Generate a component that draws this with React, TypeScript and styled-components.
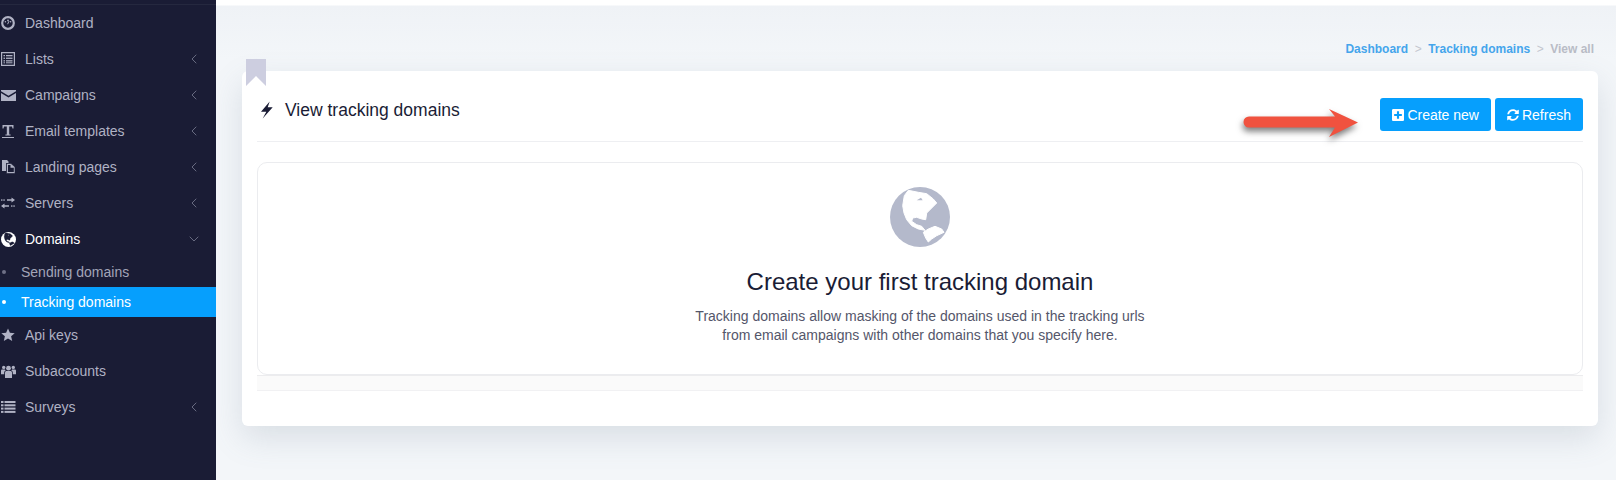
import { ChevronDown, ChevronLeft } from "lucide-react";
import { ReactNode } from "react";
import { FaPlusSquare, FaSyncAlt } from "react-icons/fa";
import styled, { createGlobalStyle } from "styled-components";

const GlobalStyle = createGlobalStyle`
  html, body {
    margin: 0;
    height: 480px;
    overflow: hidden;
    font-family: "Liberation Sans", Arial, sans-serif;
    background: #f3f6f9;
  }
`;

const Page = styled.div`
  display: flex;
  height: 480px;
  overflow: hidden;
`;

const Sidebar = styled.aside`
  width: 216px;
  flex-shrink: 0;
  background: #1a1c35;
`;

const BrandEdge = styled.div`
  height: 4px;
  border-bottom: 1px solid #25283f;
`;

const MenuRow = styled.div<{ $open?: boolean }>`
  display: flex;
  align-items: center;
  height: 36px;
  font-size: 14px;
  color: ${(p) => (p.$open ? "#ffffff" : "#b0b2c4")};
`;

const MenuIcon = styled.span`
  width: 25px;
  padding-left: 1px;
  box-sizing: border-box;
  display: flex;
  align-items: center;
`;

const MenuLabel = styled.span`
  flex: 1;
`;

const Caret = styled.span`
  width: 16px;
  margin-right: 14px;
  display: flex;
  justify-content: center;
  color: #6e7086;
`;

const SubRow = styled.div<{ $active?: boolean }>`
  display: flex;
  align-items: center;
  height: 30px;
  font-size: 14px;
  color: ${(p) => (p.$active ? "#ffffff" : "#a3a5b8")};
  background: ${(p) => (p.$active ? "#069ffd" : "transparent")};
`;

const SubDot = styled.span<{ $active?: boolean }>`
  width: 4px;
  height: 4px;
  margin: 0 15px 0 2px;
  border-radius: 50%;
  background: ${(p) => (p.$active ? "#ffffff" : "#6e7086")};
`;

const Main = styled.main`
  flex: 1;
  min-width: 0;
  background: linear-gradient(#ffffff 0 5px, #eff2f6 6px, #f3f6f9 60px);
  padding: 41px 18px 0 26px;
`;

const Breadcrumb = styled.div`
  display: flex;
  justify-content: flex-end;
  gap: 6.5px;
  height: 16px;
  line-height: 16px;
  padding-right: 4px;
  margin-bottom: 14px;
  font-size: 12px;
  font-weight: 700;
  color: #b9bcc6;
`;

const Crumb = styled.a`
  color: #45a5ec;
`;

const CrumbSep = styled.span`
  font-weight: 400;
  color: #c3c6cf;
`;

const Card = styled.section`
  position: relative;
  height: 355px;
  box-sizing: border-box;
  padding: 0 15px;
  background: #ffffff;
  border-radius: 6px;
  box-shadow: 0 12px 32px rgba(100, 115, 140, 0.18);
`;

const Bookmark = styled.span`
  position: absolute;
  top: -12px;
  left: 4px;
  width: 20px;
  height: 27px;
  background: #cdcee0;
  clip-path: polygon(0 0, 100% 0, 100% 100%, 50% 63%, 0 100%);
`;

const CardHeader = styled.header`
  display: flex;
  align-items: flex-start;
  justify-content: space-between;
  height: 71px;
  padding-top: 27px;
  box-sizing: border-box;
  border-bottom: 1px solid #eeeff2;
`;

const Title = styled.h1`
  display: flex;
  align-items: center;
  gap: 12px;
  height: 24px;
  margin: 0;
  font-size: 17.5px;
  font-weight: 400;
  color: #1a1c35;
  svg {
    margin-left: 4px;
  }
`;

const Actions = styled.div`
  display: flex;
  gap: 4px;
`;

const Button = styled.button`
  display: flex;
  align-items: center;
  gap: 3px;
  height: 33px;
  padding: 0 12px;
  border: 0;
  border-radius: 3px;
  background: #069ffd;
  color: #ffffff;
  font-family: inherit;
  font-size: 14px;
  svg {
    width: 12px;
    height: 14px;
  }
`;

const Arrow = styled.svg`
  position: absolute;
  left: 1003px;
  top: 36px;
  overflow: visible;
  filter: drop-shadow(-1px 4px 3px rgba(40, 40, 40, 0.6));
`;

const EmptyBox = styled.div`
  display: flex;
  flex-direction: column;
  align-items: center;
  height: 213px;
  box-sizing: border-box;
  margin-top: 20px;
  padding-top: 24px;
  border: 1px solid #ebecef;
  border-radius: 10px;
`;

const EmptyIcon = styled.span`
  height: 60px;
  color: #b4b9cb;
`;

const EmptyTitle = styled.h2`
  margin: 19px 0 0;
  font-size: 24px;
  line-height: 32px;
  font-weight: 400;
  color: #1a1c35;
`;

const EmptyText = styled.p`
  margin: 9px 0 0;
  font-size: 14px;
  line-height: 19px;
  text-align: center;
  color: #54566a;
`;

const Stripe = styled.div`
  height: 14px;
  background: #fafafa;
  border-top: 1px solid #ececee;
  border-bottom: 1px solid #f1f1f3;
`;

function DashIcon() {
  return (
    <svg width="14" height="14" viewBox="0 0 14 14">
      <circle cx="7" cy="7" r="5.8" fill="none" stroke="currentColor" strokeWidth="2.2" />
      <circle cx="7" cy="4.4" r="0.9" fill="currentColor" />
      <circle cx="4.4" cy="5.8" r="0.8" fill="currentColor" />
      <circle cx="9.6" cy="5.8" r="0.8" fill="currentColor" />
      <path d="M6.600 8.200l1.400-3" stroke="currentColor" strokeWidth="1" />
    </svg>
  );
}

function ListsIcon() {
  return (
    <svg width="14" height="14" viewBox="0 0 14 14" fill="currentColor">
      <path fillRule="evenodd" d="M0 0h14v14H0zM1.200 1.200v11.600h11.600V1.200z" />
      <rect x="2.500" y="3" width="1.500" height="1.300" />
      <rect x="5" y="3" width="6.500" height="1.300" />
      <rect x="2.500" y="5.600" width="1.500" height="1.300" />
      <rect x="5" y="5.600" width="6.500" height="1.300" />
      <rect x="2.500" y="8.200" width="1.500" height="1.300" />
      <rect x="5" y="8.200" width="6.500" height="1.300" />
      <rect x="2.500" y="10.300" width="1.500" height="1" />
      <rect x="5" y="10.300" width="6.500" height="1" />
    </svg>
  );
}

function EnvelopeIcon() {
  return (
    <svg width="15" height="11" viewBox="0 0 15 11" fill="currentColor">
      <path d="M0 0h15v1.300L7.500 5.800 0 1.300z" />
      <path d="M0 2.900l7.500 4.500L15 2.900V11H0z" />
    </svg>
  );
}

function TextIcon() {
  return (
    <svg width="14" height="15" viewBox="0 0 14 15" fill="currentColor">
      <path d="M1.500 1h11v3.600h-1L11 2.600H8.200v8h1.400v1H4.400v-1h1.400v-8H3l-.5 2H1.500z" />
      <rect x="1" y="13" width="12" height="1" />
    </svg>
  );
}

function PagesIcon() {
  return (
    <svg width="15" height="14" viewBox="0 0 15 14" fill="currentColor">
      <path d="M1 0h5l1.500 1.500V3H5v8H1z" />
      <path d="M5.500 3.500H10L14 7v6.500H5.500z" stroke="#1a1c35" strokeWidth="0.6" />
      <path d="M7 5h2.500v2.800H12.800v4.200H7z" fill="#1a1c35" />
    </svg>
  );
}

function ExchangeIcon() {
  return (
    <svg width="14" height="12" viewBox="0 0 14 12" fill="currentColor">
      <path d="M6 2.200h4.500V.5L14 3l-3.500 2.500V3.800H6zM8 8.200H3.500V6.500L0 9l3.500 2.500V9.800H8z" />
      <rect x="0" y="2.400" width="1.500" height="1.300" />
      <rect x="2.300" y="2.400" width="1.500" height="1.300" />
      <rect x="10" y="8.400" width="1.500" height="1.300" />
      <rect x="12.300" y="8.400" width="1.500" height="1.300" />
    </svg>
  );
}

function StarIcon() {
  return (
    <svg width="14" height="14" viewBox="0 0 14 14" fill="currentColor">
      <path d="M7 .5l1.900 4.300 4.800.4-3.600 3.100 1.100 4.700L7 10.500l-4.200 2.500 1.100-4.700L.3 5.200l4.800-.4z" />
    </svg>
  );
}

function UsersIcon() {
  return (
    <svg width="15" height="13" viewBox="0 0 15 13" fill="currentColor">
      <circle cx="7.500" cy="3.200" r="2.400" />
      <circle cx="2.700" cy="2.400" r="1.700" />
      <circle cx="12.300" cy="2.400" r="1.700" />
      <path d="M4 7.500c0-1 .8-1.600 1.600-1.600h3.800c.8 0 1.600.6 1.600 1.600V13H4z" />
      <path d="M0 5.800c0-1 .6-1.400 1.300-1.400h2.600c.3.600.7 1 1 1.200-1 .3-1.700 1-1.700 2.100v1.500H0z" />
      <path d="M15 5.800c0-1-.6-1.400-1.300-1.400h-2.600c-.3.600-.7 1-1 1.200 1 .3 1.700 1 1.700 2.100v1.500H15z" />
    </svg>
  );
}

function ListIcon() {
  return (
    <svg width="15" height="12" viewBox="0 0 15 12" fill="currentColor">
      <rect x="0" y="0" width="2.500" height="2" />
      <rect x="3.500" y="0" width="11" height="2" />
      <rect x="0" y="3.300" width="2.500" height="2" />
      <rect x="3.500" y="3.300" width="11" height="2" />
      <rect x="0" y="6.600" width="2.500" height="2" />
      <rect x="3.500" y="6.600" width="11" height="2" />
      <rect x="0" y="9.900" width="2.500" height="2" />
      <rect x="3.500" y="9.900" width="11" height="2" />
    </svg>
  );
}

function BoltIcon() {
  return (
    <svg width="12" height="18" viewBox="0 0 12 18" fill="currentColor">
      <path d="M8.700.5L0 10.700h5.300L1.700 17.500 11.700 6.300H6.700z" />
    </svg>
  );
}

const northAmerica =
  "14.300,8.700 18.300,3.300 28.300,5.300 36.700,6.700 43.300,12 46.700,16 40.700,22 36.700,26 35.700,32.700 31.700,32 26.700,30.300 22.700,31 21.700,34.300 26.700,37.700 31.700,39.300 35,43.300 28.300,42 21.700,38.700 16.700,32.700 14,26 12.700,18.700";
const southAmerica =
  "33.300,45.300 38.300,42 45,39.300 51.700,42 54,45.300 46.700,48.700 41.700,52 38.300,55 35.700,51";

function Globe({ size, land }: { size: number; land: string }) {
  return (
    <svg width={size} height={size} viewBox="0 0 60 60">
      <circle cx="30" cy="30" r="30" fill="currentColor" />
      <g fill={land} stroke={land} strokeWidth="1" strokeLinejoin="round">
        <polygon points={northAmerica} />
        <polygon points={southAmerica} />
      </g>
      <path d="M26.700 13.300l4.300-2.600 1.700 2.600z" fill="currentColor" />
    </svg>
  );
}

type Item = { label: string; icon: ReactNode; caret?: boolean };

const topItems: Item[] = [
  { label: "Dashboard", icon: <DashIcon /> },
  { label: "Lists", icon: <ListsIcon />, caret: true },
  { label: "Campaigns", icon: <EnvelopeIcon />, caret: true },
  { label: "Email templates", icon: <TextIcon />, caret: true },
  { label: "Landing pages", icon: <PagesIcon />, caret: true },
  { label: "Servers", icon: <ExchangeIcon />, caret: true },
];

const bottomItems: Item[] = [
  { label: "Api keys", icon: <StarIcon /> },
  { label: "Subaccounts", icon: <UsersIcon /> },
  { label: "Surveys", icon: <ListIcon />, caret: true },
];

function Row({ item }: { item: Item }) {
  return (
    <MenuRow>
      <MenuIcon>{item.icon}</MenuIcon>
      <MenuLabel>{item.label}</MenuLabel>
      {item.caret && (
        <Caret>
          <ChevronLeft size={16} strokeWidth={1.4} />
        </Caret>
      )}
    </MenuRow>
  );
}

export default function App() {
  return (
    <Page>
      <GlobalStyle />
      <Sidebar>
        <BrandEdge />
        {topItems.map((item) => (
          <Row key={item.label} item={item} />
        ))}
        <MenuRow $open>
          <MenuIcon>
            <Globe size={15} land="#1a1c35" />
          </MenuIcon>
          <MenuLabel>Domains</MenuLabel>
          <Caret>
            <ChevronDown size={16} strokeWidth={1.4} />
          </Caret>
        </MenuRow>
        <SubRow>
          <SubDot />
          Sending domains
        </SubRow>
        <SubRow $active>
          <SubDot $active />
          Tracking domains
        </SubRow>
        {bottomItems.map((item) => (
          <Row key={item.label} item={item} />
        ))}
      </Sidebar>
      <Main>
        <Breadcrumb>
          <Crumb>Dashboard</Crumb>
          <CrumbSep>&gt;</CrumbSep>
          <Crumb>Tracking domains</Crumb>
          <CrumbSep>&gt;</CrumbSep>
          <span>View all</span>
        </Breadcrumb>
        <Card>
          <Bookmark />
          <CardHeader>
            <Title>
              <BoltIcon />
              View tracking domains
            </Title>
            <Actions>
              <Button>
                <FaPlusSquare />
                Create new
              </Button>
              <Button>
                <FaSyncAlt />
                Refresh
              </Button>
            </Actions>
          </CardHeader>
          <Arrow width="113" height="30" viewBox="0 0 113 30">
            <path
              d="M4 9.500H90L84 2l29 13.500L84 30l6-9.500H4a5.500 5.500 0 0 1 0-11z"
              fill="#f0523f"
            />
          </Arrow>
          <EmptyBox>
            <EmptyIcon>
              <Globe size={60} land="#ffffff" />
            </EmptyIcon>
            <EmptyTitle>Create your first tracking domain</EmptyTitle>
            <EmptyText>
              Tracking domains allow masking of the domains used in the tracking urls
              <br />
              from email campaigns with other domains that you specify here.
            </EmptyText>
          </EmptyBox>
          <Stripe />
        </Card>
      </Main>
    </Page>
  );
}
